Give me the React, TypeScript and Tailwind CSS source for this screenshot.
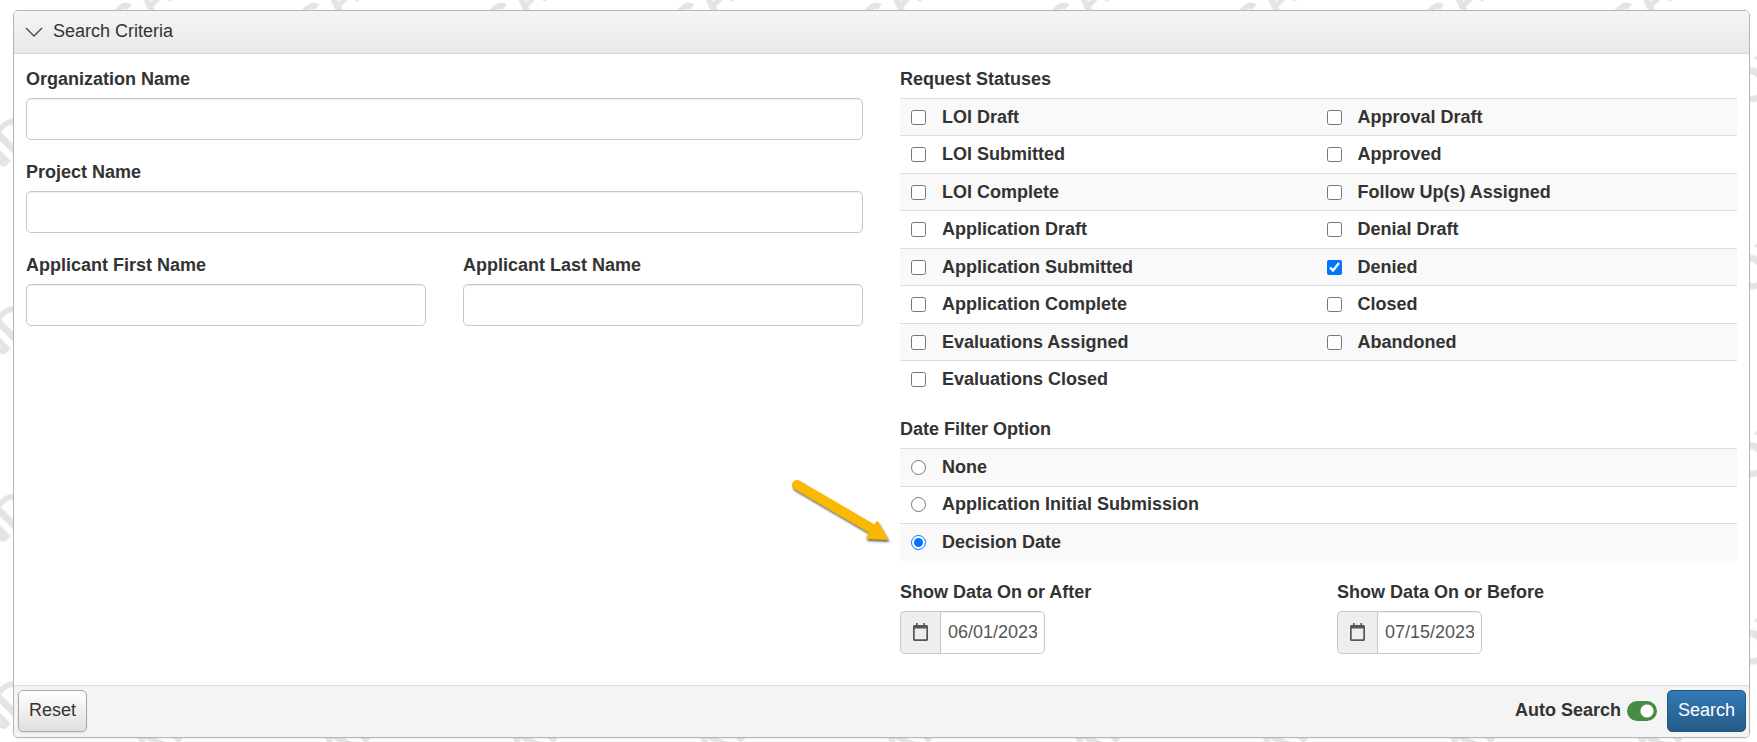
import React, { useState } from 'react';

const statusRows = [
  ['LOI Draft', 'Approval Draft'],
  ['LOI Submitted', 'Approved'],
  ['LOI Complete', 'Follow Up(s) Assigned'],
  ['Application Draft', 'Denial Draft'],
  ['Application Submitted', 'Denied'],
  ['Application Complete', 'Closed'],
  ['Evaluations Assigned', 'Abandoned'],
  ['Evaluations Closed', ''],
];

const dateOptions = ['None', 'Application Initial Submission', 'Decision Date'];

const inputClass =
  'h-[42px] w-full rounded-[5px] border border-[#c8c8c8] bg-white px-3 text-[#555] shadow-[inset_0_1px_1px_rgba(0,0,0,0.075)] outline-none focus:border-[#66afe9]';

// the word is longer than one tile, so it is repeated in the neighbouring ones
const watermarkOrigins = [
  [129, 43],
  [-58.5, 43],
  [129, 230.5],
  [-58.5, 230.5],
];

function Watermark() {
  return (
    <svg className="absolute inset-0 h-full w-full" aria-hidden="true">
      <defs>
        <pattern id="watermark" width="187.5" height="187.5" patternUnits="userSpaceOnUse">
          {watermarkOrigins.map(([x, y]) => (
            <text
              key={`${x},${y}`}
              transform={`translate(${x} ${y}) rotate(-45)`}
              fontFamily="Liberation Sans, Arial, sans-serif"
              fontWeight="bold"
              fontSize="48"
              fill="#e4e4e4"
            >
              SANDBOX
            </text>
          ))}
        </pattern>
      </defs>
      <rect width="100%" height="100%" fill="url(#watermark)" />
    </svg>
  );
}

function TextField({ id, label }: { id: string; label: string }) {
  return (
    <div>
      <label htmlFor={id} className="mb-1.5 block font-bold">
        {label}
      </label>
      <input id={id} type="text" className={inputClass} />
    </div>
  );
}

function DateField({ id, label, value }: { id: string; label: string; value: string }) {
  return (
    <div>
      <label htmlFor={id} className="mb-1.5 block font-bold">
        {label}
      </label>
      <div className="flex">
        <span className="flex h-[43px] w-10 items-center justify-center rounded-l-[5px] border border-r-0 border-[#c8c8c8] bg-[#eee]">
          <svg width="15" height="18" viewBox="0 0 15 18" aria-hidden="true">
            <path
              d="M3 0h1.6v2h5.8V0H12v2h2l1 1v14l-1 1H1l-1-1V3l1-1h2zM1.7 5.4v10.9h11.6V5.4z"
              fill="#555"
              fillRule="evenodd"
            />
          </svg>
        </span>
        <input
          id={id}
          type="text"
          defaultValue={value}
          className="h-[43px] w-[105px] rounded-r-[5px] border border-[#c8c8c8] bg-white px-[7px] text-[#555] shadow-[inset_0_1px_1px_rgba(0,0,0,0.075)] outline-none"
        />
      </div>
    </div>
  );
}

function App() {
  const [open, setOpen] = useState(true);
  const [checked, setChecked] = useState<string[]>(['Denied']);
  const [dateOption, setDateOption] = useState('Decision Date');
  const [autoSearch, setAutoSearch] = useState(true);

  const toggleStatus = (name: string) => {
    setChecked(checked.includes(name) ? checked.filter((s) => s !== name) : [...checked, name]);
  };

  return (
    <div className="relative min-h-screen bg-white pt-[10px] pr-[7px] pb-[4px] pl-[13px] font-['Liberation_Sans',Arial,sans-serif] text-[18px] leading-[25px] text-[#333]">
      <Watermark />
      <form
        className="relative overflow-hidden rounded-[5px] border border-[#b5b5b5] bg-white shadow-[0_1px_1px_rgba(0,0,0,0.05)]"
        onSubmit={(e) => e.preventDefault()}
      >
        <button
          type="button"
          onClick={() => setOpen(!open)}
          className="flex h-[43px] w-full items-center gap-2.5 border-b border-[#d9d9d9] bg-linear-to-b from-[#f5f5f5] to-[#e8e8e8] px-[11px] pb-[2px] text-left"
        >
          <svg width="18" height="11" viewBox="0 0 18 11" className="mt-0.5" aria-hidden="true">
            <path d="M1 1l8 8 8-8" fill="none" stroke="#444" strokeWidth="1.3" />
          </svg>
          Search Criteria
        </button>

        {open && (
          <div className="grid grid-cols-2 gap-x-[37px] px-3 pt-[13px] pb-[31px]">
            <div className="flex flex-col gap-5">
              <TextField id="organization" label="Organization Name" />
              <TextField id="project" label="Project Name" />
              <div className="grid grid-cols-2 gap-x-[37px]">
                <TextField id="first-name" label="Applicant First Name" />
                <TextField id="last-name" label="Applicant Last Name" />
              </div>
            </div>

            <div>
              <h2 className="mb-1.5 font-bold">Request Statuses</h2>
              <table className="w-full table-fixed border-collapse">
                <tbody>
                  {statusRows.map((row) => (
                    <tr key={row[0]} className="h-[37px] border-t border-[#ddd] odd:bg-[#f9f9f9] even:h-[38px]">
                      {row.map((name, i) => (
                        <td key={i} className="p-0 first:pl-[11px] last:pl-[8px]">
                          {name && (
                            <label className="flex items-center gap-4 font-bold">
                              <input
                                type="checkbox"
                                className="size-[15px]"
                                checked={checked.includes(name)}
                                onChange={() => toggleStatus(name)}
                              />
                              {name}
                            </label>
                          )}
                        </td>
                      ))}
                    </tr>
                  ))}
                </tbody>
              </table>

              <fieldset className="mt-[18px]">
                <legend className="mb-1.5 font-bold">Date Filter Option</legend>
                {dateOptions.map((name) => (
                  <label
                    key={name}
                    className="relative flex h-[37px] items-center gap-4 border-t border-[#ddd] pl-[11px] font-bold even:h-[38px] even:bg-[#f9f9f9]"
                  >
                    <input
                      type="radio"
                      name="date-filter"
                      className="size-[15px]"
                      checked={dateOption === name}
                      onChange={() => setDateOption(name)}
                    />
                    {name}
                    {name === 'Decision Date' && (
                      <svg
                        className="absolute right-full bottom-[18px] mr-2.5 overflow-visible drop-shadow-[1px_2px_1px_rgba(0,0,0,0.6)]"
                        width="100"
                        height="64"
                        viewBox="0 0 100 64"
                        aria-hidden="true"
                      >
                        <path d="M7 6L84 51" stroke="#fbb800" strokeWidth="10" strokeLinecap="round" />
                        <path d="M87 43L97 60L77 59Z" fill="#fbb800" stroke="#fbb800" strokeWidth="2" strokeLinejoin="round" />
                      </svg>
                    )}
                  </label>
                ))}
              </fieldset>

              <div className="mt-[19px] grid grid-cols-2 gap-x-[37px]">
                <DateField id="date-after" label="Show Data On or After" value="06/01/2023" />
                <DateField id="date-before" label="Show Data On or Before" value="07/15/2023" />
              </div>
            </div>
          </div>
        )}

        <div className="flex items-center justify-between border-t border-[#ddd] bg-[#f4f4f4] pt-1 pr-[3px] pb-[5px] pl-1">
          <button
            type="reset"
            className="h-[42px] rounded-[5px] border border-[#aaa] bg-linear-to-b from-white to-[#e0e0e0] px-2.5 shadow-[0_1px_2px_rgba(0,0,0,0.1)]"
          >
            Reset
          </button>
          <div className="flex items-center">
            <label htmlFor="auto-search" className="font-bold">
              Auto Search
            </label>
            <input
              id="auto-search"
              type="checkbox"
              role="switch"
              checked={autoSearch}
              onChange={() => setAutoSearch(!autoSearch)}
              className="mr-[10px] ml-[6px] h-5 w-[30px] appearance-none rounded-full bg-[#999] bg-[radial-gradient(circle_at_10px_10px,white_6px,transparent_7px)] checked:bg-[#468c46] checked:bg-[radial-gradient(circle_at_20px_10px,white_6px,transparent_7px)]"
            />
            <button
              type="submit"
              className="h-[42px] rounded-[5px] border border-[#245580] bg-linear-to-b from-[#337ab7] to-[#265a88] px-2.5 text-white"
            >
              Search
            </button>
          </div>
        </div>
      </form>
    </div>
  );
}

export default App;
